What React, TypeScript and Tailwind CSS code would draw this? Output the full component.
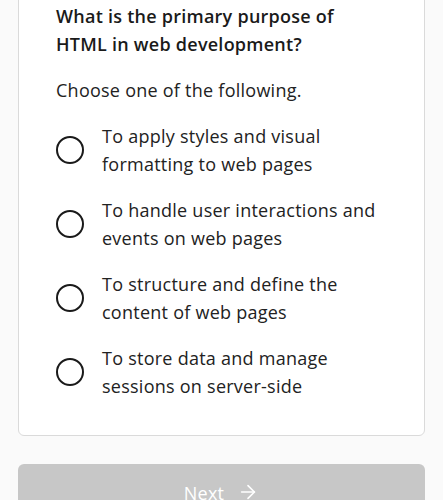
import { ArrowRight } from 'lucide-react';

const options = [
  'To apply styles and visual formatting to web pages',
  'To handle user interactions and events on web pages',
  'To structure and define the content of web pages',
  'To store data and manage sessions on server-side',
];

export default function App() {
  return (
    <div className="min-h-[500px] bg-[#fafafa] px-[18px] font-['Open_Sans',sans-serif] tracking-[0.25px] overflow-hidden">
      {/* Question card */}
      <div className="-mt-8 bg-white border border-[#dadada] rounded-md pt-[33px] pb-[35px] px-[37px]">
        <h2 className="pr-[40px] text-[18px] leading-[28px] font-semibold text-[#1a1a1a]">
          What is the primary purpose of HTML in web development?
        </h2>
        <p className="mt-[18px] text-[18px] leading-[28px] text-[#222]">Choose one of the following.</p>
        <ul className="mt-[18px] flex flex-col gap-[18px]">
          {options.map((opt) => (
            <li key={opt} className="flex items-center gap-[18px]">
              <span className="w-[28px] h-[28px] shrink-0 rounded-full border-2 border-[#1a1a1a]" />
              <span className="text-[18px] leading-[28px] text-[#222]">{opt}</span>
            </li>
          ))}
        </ul>
      </div>

      {/* Next button (disabled) */}
      <button
        disabled
        className="mt-[28px] w-full h-[56px] rounded-md bg-[#c7c7c7] text-white text-[18px] flex items-center justify-center gap-[13px]"
      >
        <span className="pt-[2px]">Next</span>
        <ArrowRight className="w-[22px] h-[22px]" strokeWidth={1.75} />
      </button>
    </div>
  );
}
